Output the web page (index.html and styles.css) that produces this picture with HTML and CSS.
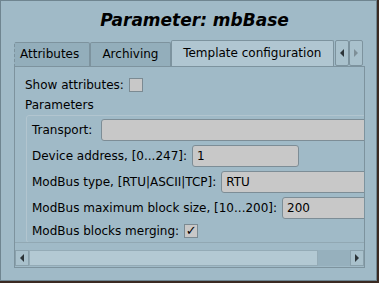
FILE: index.html
```html
<!DOCTYPE html>
<html lang="en">
<head>
    <meta charset="UTF-8">
    <title>Parameter: mbBase</title>
    <link rel="stylesheet" href="styles.css">
</head>
<body>
    <div class="window">
        <h1 class="title">Parameter: mbBase</h1>
        <div class="tabs">
            <div class="tab first">Attributes</div>
            <div class="tab second">Archiving</div>
            <div class="tab active">Template configuration</div>
            <div class="tab-scroll">
                <span class="tab-btn"><span class="tri tri-left"></span></span>
                <span class="tab-btn disabled"><span class="tri tri-right"></span></span>
            </div>
        </div>
        <div class="pane">
            <div class="view">
                <div class="content">
                    <div class="row top-row">
                        <span class="label">Show attributes:</span>
                        <span class="check"></span>
                    </div>
                    <div class="section">Parameters</div>
                    <div class="group">
                        <div class="row">
                            <span class="label wide-gap">Transport:</span>
                            <span class="field grow"></span>
                        </div>
                        <div class="row">
                            <span class="label">Device address, [0...247]:</span>
                            <span class="field short">1</span>
                        </div>
                        <div class="row">
                            <span class="label">ModBus type, [RTU|ASCII|TCP]:</span>
                            <span class="field grow">RTU</span>
                        </div>
                        <div class="row">
                            <span class="label">ModBus maximum block size, [10...200]:</span>
                            <span class="field grow">200</span>
                        </div>
                        <div class="row check-row">
                            <span class="label">ModBus blocks merging:</span>
                            <span class="check checked">&#10003;</span>
                        </div>
                    </div>
                </div>
            </div>
            <div class="hscroll">
                <span class="sb-btn"><span class="tri tri-left"></span></span>
                <span class="sb-handle"></span>
                <span class="sb-trough"></span>
                <span class="sb-btn"><span class="tri tri-right"></span></span>
            </div>
        </div>
    </div>
</body>
</html>
```

FILE: styles.css
```css
body {
    margin: 0;
    font-family: "DejaVu Sans", sans-serif;
    font-size: 12px;
    color: #000;
    background: #3a2a22;
}
.window {
    width: 377px;
    height: 281px;
    box-sizing: border-box;
    background: #a0bac7;
    border: 1px solid #6f8590;
    padding: 0 13px;
    display: flex;
    flex-direction: column;
}
.title {
    margin: 0;
    height: 39px;
    line-height: 39px;
    padding-left: 12px;
    text-align: center;
    font-size: 17px;
    font-weight: bold;
    font-style: italic;
}
.tabs {
    display: flex;
    align-items: flex-end;
    height: 26px;
}
.tab {
    height: 24px;
    line-height: 23px;
    box-sizing: border-box;
    background: #93aebb;
    border: 1px solid #7d939e;
    border-bottom: none;
    border-radius: 2px 2px 0 0;
    text-align: center;
}
.tab.first {
    width: 77px;
    text-align: left;
    padding-left: 5px;
    border-left: 1px dashed #7d939e;
}
.tab.second {
    width: 81px;
}
.tab.active {
    width: 165px;
    height: 26px;
    line-height: 25px;
    background: #b0c6d1;
}
.tab-scroll {
    display: flex;
    height: 26px;
    padding-left: 1px;
}
.tab-btn {
    width: 14px;
    height: 26px;
    box-sizing: border-box;
    border: 1px solid #7d939e;
    border-radius: 2px;
    background: #a9c1cc;
    display: flex;
    align-items: center;
    justify-content: center;
}
.tri {
    width: 0;
    height: 0;
    border-top: 4px solid transparent;
    border-bottom: 4px solid transparent;
}
.tri-left {
    border-right: 4px solid #2c3438;
}
.tri-right {
    border-left: 4px solid #2c3438;
}
.tab-btn.disabled .tri-right {
    border-left-color: #7e8f97;
}
.pane {
    width: 351px;
    height: 202px;
    box-sizing: border-box;
    border: 1px solid #7d939e;
    display: flex;
    flex-direction: column;
}
.view {
    flex: 1;
    overflow: hidden;
    border-bottom: 1px solid #91a8b3;
}
.content {
    width: 420px;
    padding: 9px 0 0 10px;
}
.row {
    display: flex;
    align-items: center;
    height: 22px;
    margin-bottom: 4px;
}
.top-row {
    height: 18px;
    margin-bottom: 0;
}
.check-row {
    height: 15px;
    margin-bottom: 0;
}
.label {
    white-space: nowrap;
    margin-right: 5px;
}
.label.wide-gap {
    margin-right: 9px;
}
.check {
    width: 14px;
    height: 14px;
    box-sizing: border-box;
    border: 1px solid #7b8a92;
    background: #c8c8c8;
    font-size: 13px;
    line-height: 12px;
    text-align: center;
    font-weight: bold;
}
.section {
    margin-top: 2px;
    height: 18px;
    line-height: 18px;
}
.group {
    margin: 1px 0 0 1px;
    border: 1px solid #b2c5cf;
    border-radius: 3px;
    padding: 3px 0 4px 5px;
}
.field {
    height: 22px;
    line-height: 21px;
    box-sizing: border-box;
    border: 1px solid #7d8d96;
    border-radius: 3px;
    background: #c8c8c8;
    padding: 0 4px;
}
.grow {
    flex: 1;
}
.short {
    width: 107px;
}
.hscroll {
    display: flex;
    height: 16px;
    margin: 7px 0 1px 0;
    background: #96b0bd;
}
.sb-btn {
    width: 14px;
    display: flex;
    align-items: center;
    justify-content: center;
    background: #a9c1cc;
    border: 1px solid #8aa1ac;
    box-sizing: border-box;
}
.sb-handle {
    width: 289px;
    background: #b3c9d3;
    border: 1px solid #94abb6;
    box-sizing: border-box;
}
.sb-trough {
    flex: 1;
}
```
